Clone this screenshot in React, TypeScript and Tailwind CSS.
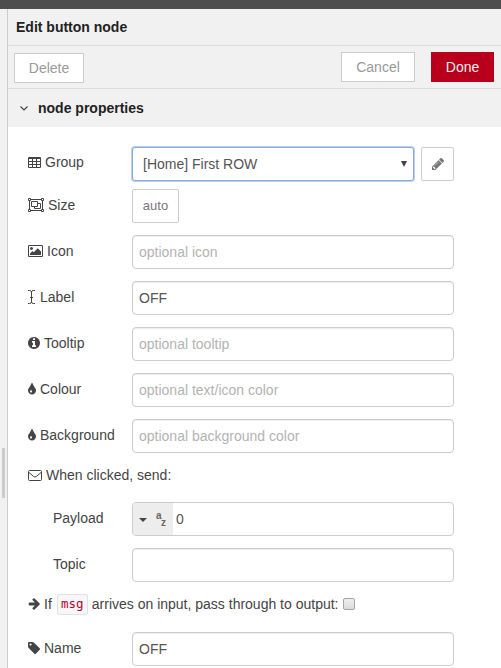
import type { ReactNode } from "react";

const INPUT =
  "flex h-[34px] w-[322px] items-center rounded-[4px] border border-[#ccc] bg-white px-[6px] text-[#555] shadow-[inset_0_1px_1px_rgba(0,0,0,0.075)]";

function Glyph({ d, box, w, h }: { d: string; box: string; w: number; h: number }) {
  return (
    <svg width={w} height={h} viewBox={box} fill="currentColor" fillRule="evenodd" className="block shrink-0">
      <path d={d} />
    </svg>
  );
}

const TableIcon = () => (
  <Glyph w={13} h={11} box="0 0 13 11" d="M1 0h11a1 1 0 0 1 1 1v9a1 1 0 0 1-1 1H1a1 1 0 0 1-1-1V1a1 1 0 0 1 1-1zM1 2v2h3V2zM5 2v2h3V2zM9 2v2h3V2zM1 5v2h3V5zM5 5v2h3V5zM9 5v2h3V5zM1 8v2h3V8zM5 8v2h3V8zM9 8v2h3V8z" />
);

const ObjectGroupIcon = () => (
  <svg width="16" height="14" viewBox="0 0 16 14" fill="none" stroke="currentColor" className="block shrink-0">
    <path d="M3 1.5h10M3 12.5h10M1.5 3v8M14.5 3v8" />
    <path d="M.5.5h2v2h-2zM13.5.5h2v2h-2zM.5 11.5h2v2h-2zM13.5 11.5h2v2h-2z" />
    <path d="M3.5 3.5h6v5h-6zM9.5 5.5h3v5h-6v-2" />
  </svg>
);

const PictureIcon = () => (
  <Glyph
    w={15}
    h={12}
    box="-64 128 1920 1536"
    d="M576 576q0 80-56 136t-136 56-136-56-56-136 56-136 136-56 136 56 56 136zm1024 384v448h-1408v-192l320-320 160 160 512-512zm96-704h-1600q-13 0-22.5 9.5t-9.5 22.5v1216q0 13 9.5 22.5t22.5 9.5h1600q13 0 22.5-9.5t9.5-22.5v-1216q0-13-9.5-22.5t-22.5-9.5zm160 32v1216q0 66-47 113t-113 47h-1600q-66 0-113-47t-47-113v-1216q0-66 47-113t113-47h1600q66 0 113 47t47 113z"
  />
);

const CursorIcon = () => (
  <svg width="8" height="14" viewBox="0 0 8 14" fill="none" stroke="currentColor" className="block shrink-0">
    <path d="M0 .5h1.5q2 0 2 1.5v10q0 1.500-2 1.500H0M7 .5H5.500q-2 0-2 1.500v10q0 1.500 2 1.500H7M2 7.500h3" />
  </svg>
);

const InfoIcon = () => (
  <Glyph
    w={12}
    h={12}
    box="128 128 1536 1536"
    d="M1152 1376v-160q0-14-9-23t-23-9h-96v-512q0-14-9-23t-23-9h-320q-14 0-23 9t-9 23v160q0 14 9 23t23 9h96v320h-96q-14 0-23 9t-9 23v160q0 14 9 23t23 9h448q14 0 23-9t9-23zm-128-896v-160q0-14-9-23t-23-9h-192q-14 0-23 9t-9 23v160q0 14 9 23t23 9h192q14 0 23-9t9-23zm640 416q0 209-103 385.5t-279.5 279.500-385.500 103-385.500-103-279.500-279.500-103-385.500 103-385.500 279.500-279.500 385.500-103 385.500 103 279.500 279.500 103 385.500z"
  />
);

const TintIcon = () => (
  <Glyph
    w={8}
    h={12}
    box="384 96 1024 1472"
    d="M896 1152q0-36-20-69-1-1-15.5-22.5t-25.5-38-25-44-21-50.500q-4-16-21-16t-21 16q-7 23-21 50.500t-25 44-25.500 38-15.500 22.500q-20 33-20 69 0 53 37.500 90.500t90.500 37.500 90.500-37.500 37.500-90.500zm512-128q0 212-150 362t-362 150-362-150-150-362q0-145 81-275 6-9 62.500-90.500t101-151 99.500-178 83-201.500q9-30 34-47t51-17 51.500 17 33.500 47q28 93 83 201.500t99.500 178 101 151 62.500 90.500q81 127 81 275z"
  />
);

const EnvelopeIcon = () => (
  <svg width="14" height="11" viewBox="0 0 14 11" fill="none" stroke="currentColor" className="block shrink-0">
    <rect x=".5" y=".5" width="13" height="10" rx="1" />
    <path d="M1 2.500l4.600 4q1.400 1 2.800 0l4.600-4" />
  </svg>
);

const ArrowIcon = () => (
  <Glyph
    w={12}
    h={12}
    box="64 160 1536 1600"
    d="M1600 960q0 54-37 91l-651 651q-39 37-91 37-51 0-90-37l-75-75q-38-38-38-91t38-91l293-293h-704q-52 0-84.500-37.500t-32.500-90.500v-128q0-53 32.500-90.500t84.500-37.500h704l-293-294q-38-36-38-90t38-90l75-75q38-38 90-38 53 0 91 38l651 651q37 35 37 90z"
  />
);

const TagIcon = () => (
  <Glyph
    w={12}
    h={12}
    box="128 128 1516 1516"
    d="M576 448q0-53-37.500-90.500t-90.500-37.500-90.500 37.500-37.500 90.500 37.500 90.500 90.500 37.500 90.500-37.500 37.500-90.500zm1067 576q0 53-37 90l-491 492q-39 37-91 37-53 0-90-37l-715-716q-38-37-64.500-101t-26.500-117v-416q0-52 38-90t90-38h416q53 0 117 26.500t102 64.500l715 714q37 39 37 91z"
  />
);

const PencilIcon = () => (
  <Glyph
    w={12}
    h={12}
    box="128 149 1515 1515"
    d="M491 1536l91-91-235-235-91 91v107h128v128h107zm523-928q0-22-22-22-10 0-17 7l-542 542q-7 7-7 17 0 22 22 22 10 0 17-7l542-542q7-7 7-17zm-54-192l416 416-832 832h-416v-416zm683 96q0 53-37 90l-166 166-416-416 166-165q36-38 90-38 53 0 91 38l235 234q37 39 37 91z"
  />
);

function Row({ icon, label, children }: { icon?: ReactNode; label: string; children: ReactNode }) {
  return (
    <div className="mb-3 flex h-[34px]">
      <div className={icon ? "flex h-8 w-[104px] items-center gap-1" : "flex h-8 w-[104px] items-center pl-[25px]"}>
        {icon}
        <span>{label}</span>
      </div>
      {children}
    </div>
  );
}

function Field({ value, placeholder }: { value?: string; placeholder?: string }) {
  return (
    <div className={INPUT}>
      {value ? <span>{value}</span> : <span className="text-[#b3b3b3]">{placeholder}</span>}
    </div>
  );
}

export default function App() {
  return (
    <div className="flex h-[668px] w-[501px] flex-col overflow-hidden bg-[#f1f1f1] font-['Liberation_Sans',Arial,sans-serif] text-[14px] leading-5 text-[#444]">
      <div className="h-[9px] shrink-0 bg-[#4d4d4d]" />
      <div className="flex flex-1">
        <div className="flex w-2 shrink-0 justify-end border-r border-[#ccc]">
          <div className="mt-[439px] h-[50px] w-[5px] shrink-0 border-r-2 border-[#f1f1f1] bg-[#ccc]" />
        </div>
        <div className="w-[493px] shrink-0">
          <div className="flex h-[37px] items-center border-b border-[#ddd] pl-2 font-bold text-[#222]">Edit button node</div>
          <div className="flex h-[43px] border-b border-[#ddd] pl-[6px]">
            <div className="mt-[7px] flex h-[30px] w-[70px] items-center justify-center border border-[#ccc] bg-white text-[#999]">Delete</div>
            <div className="mt-[6px] ml-[257px] flex h-[30px] w-[74px] items-center justify-center border border-[#ccc] bg-white text-[#999]">Cancel</div>
            <div className="mt-[6px] ml-4 flex h-[30px] w-[63px] items-center justify-center bg-[#b8001c] text-[#eee]">Done</div>
          </div>
          <div className="flex h-[38px] items-center gap-[10px] pl-3 font-bold text-[#222]">
            <svg width="8" height="5" viewBox="0 0 8 5" fill="none" stroke="#444" strokeWidth="1.2">
              <path d="M.5.5L4 4 7.500.5" />
            </svg>
            <span>node properties</span>
          </div>
          <div className="h-[541px] bg-white pt-5 pl-5">
            <div className="mb-2 flex h-[34px]">
              <div className="flex h-[30px] w-[104px] items-center gap-1">
                <TableIcon />
                <span>Group</span>
              </div>
              <div className="flex h-[34px] w-[282px] items-center justify-between rounded-[3px] border border-[#8fa9cf] bg-white pr-[6px] pl-[10px] text-[#555] shadow-[0_0_0_1px_#b5d1f7]">
                <span>[Home] First ROW</span>
                <svg width="6" height="6" viewBox="0 0 6 6" fill="#444">
                  <path d="M0 0h6L3 6z" />
                </svg>
              </div>
              <div className="ml-[7px] flex h-[34px] w-[33px] items-center justify-center rounded-[2px] border border-[#ccc] text-[#777]">
                <PencilIcon />
              </div>
            </div>
            <div className="mb-3 flex h-[34px]">
              <div className="flex h-8 w-[104px] items-center gap-1">
                <ObjectGroupIcon />
                <span>Size</span>
              </div>
              <div className="flex h-[34px] w-[47px] items-center justify-center rounded-[2px] border border-[#ccc] text-[13px] text-[#777]">auto</div>
            </div>
            <Row icon={<PictureIcon />} label="Icon"><Field placeholder="optional icon" /></Row>
            <Row icon={<CursorIcon />} label="Label"><Field value="OFF" /></Row>
            <Row icon={<InfoIcon />} label="Tooltip"><Field placeholder="optional tooltip" /></Row>
            <Row icon={<TintIcon />} label="Colour"><Field placeholder="optional text/icon color" /></Row>
            <Row icon={<TintIcon />} label="Background"><Field placeholder="optional background color" /></Row>
            <div className="mb-[17px] flex h-5 items-center gap-1">
              <EnvelopeIcon />
              <span>When clicked, send:</span>
            </div>
            <Row label="Payload">
              <div className="flex h-[34px] w-[322px] overflow-hidden rounded-[4px] border border-[#ccc]">
                <div className="flex w-10 items-center bg-[#ededed] pl-[6px]">
                  <svg width="8" height="4" viewBox="0 0 8 4" fill="#444" className="mt-[2px]"><path d="M0 0h8L4 4z" /></svg>
                  <div className="ml-[9px] flex w-[10px] flex-col text-[10px] leading-[7px] font-bold text-[#666]">
                    <span className="self-start">a</span>
                    <span className="self-end">z</span>
                  </div>
                </div>
                <span className="flex items-center pl-[3px] text-[#555]">0</span>
              </div>
            </Row>
            <Row label="Topic"><Field /></Row>
            <div className="mb-[18px] flex h-5 items-center">
              <ArrowIcon />
              <span className="ml-1">If</span>
              <code className="mr-1 ml-[5px] flex h-[21px] w-[31px] items-center justify-center rounded-[2px] border border-[#e1e1e8] bg-[#f7f7f9] font-['DejaVu_Sans_Mono',monospace] text-[12.5px] text-[#b8002a]">msg</code>
              <span>arrives on input, pass through to output:</span>
              <div className="ml-1 size-3 rounded-[2px] border border-[#a5a5a5] bg-linear-to-b from-[#eee] to-[#dcdcdc]" />
            </div>
            <Row icon={<TagIcon />} label="Name"><Field value="OFF" /></Row>
          </div>
        </div>
      </div>
    </div>
  );
}
